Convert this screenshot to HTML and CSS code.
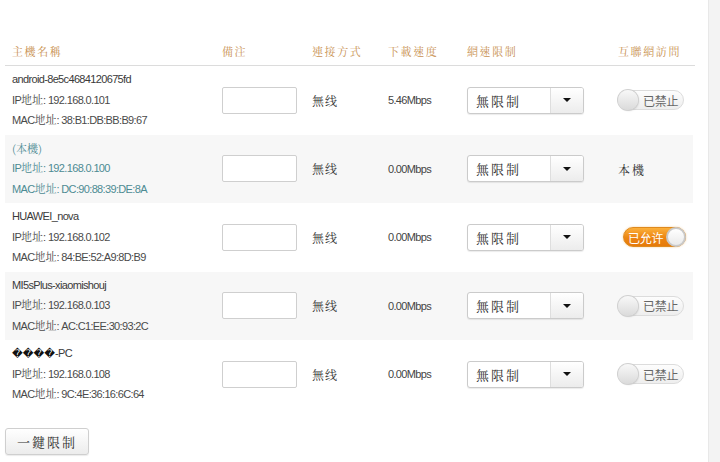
FILE: index.html
```html
<!DOCTYPE html>
<html lang="zh-Hant">
<head>
<meta charset="utf-8">
<title>設備列表</title>
<link rel="stylesheet" href="styles.css">
</head>
<body>
<div class="page">
  <main class="main">
    <div class="table">
      <div class="row head">
        <div class="c name">主機名稱</div>
        <div class="c remark">備注</div>
        <div class="c conn">連接方式</div>
        <div class="c speed">下載速度</div>
        <div class="c limit">網速限制</div>
        <div class="c access">互聯網訪問</div>
      </div>

      <div class="row">
        <div class="c name"><div class="host">android-8e5c4684120675fd</div><div class="info">IP<span class="cj">地址</span>: 192.168.0.101</div><div class="info">MAC<span class="cj">地址</span>: 38:B1:DB:BB:B9:67</div></div>
        <div class="c remark"><input class="box" type="text"></div>
        <div class="c conn">無线</div>
        <div class="c speed">5.46Mbps</div>
        <div class="c limit"><div class="sel"><span class="sel-v">無限制</span><span class="sel-a"><i class="tri"></i></span></div></div>
        <div class="c access"><div class="tog off"><i class="knob"></i><span class="tl">已禁止</span></div></div>
      </div>

      <div class="row alt self">
        <div class="c name"><div class="host cj">(本機)</div><div class="info">IP<span class="cj">地址</span>: 192.168.0.100</div><div class="info">MAC<span class="cj">地址</span>: DC:90:88:39:DE:8A</div></div>
        <div class="c remark"><input class="box" type="text"></div>
        <div class="c conn">無线</div>
        <div class="c speed">0.00Mbps</div>
        <div class="c limit"><div class="sel"><span class="sel-v">無限制</span><span class="sel-a"><i class="tri"></i></span></div></div>
        <div class="c access"><span class="local">本機</span></div>
      </div>

      <div class="row">
        <div class="c name"><div class="host">HUAWEI_nova</div><div class="info">IP<span class="cj">地址</span>: 192.168.0.102</div><div class="info">MAC<span class="cj">地址</span>: 84:BE:52:A9:8D:B9</div></div>
        <div class="c remark"><input class="box" type="text"></div>
        <div class="c conn">無线</div>
        <div class="c speed">0.00Mbps</div>
        <div class="c limit"><div class="sel"><span class="sel-v">無限制</span><span class="sel-a"><i class="tri"></i></span></div></div>
        <div class="c access"><div class="tog on"><span class="tl">已允许</span><i class="knob"></i></div></div>
      </div>

      <div class="row alt">
        <div class="c name"><div class="host">MI5sPlus-xiaomishouj</div><div class="info">IP<span class="cj">地址</span>: 192.168.0.103</div><div class="info">MAC<span class="cj">地址</span>: AC:C1:EE:30:93:2C</div></div>
        <div class="c remark"><input class="box" type="text"></div>
        <div class="c conn">無线</div>
        <div class="c speed">0.00Mbps</div>
        <div class="c limit"><div class="sel"><span class="sel-v">無限制</span><span class="sel-a"><i class="tri"></i></span></div></div>
        <div class="c access"><div class="tog off"><i class="knob"></i><span class="tl">已禁止</span></div></div>
      </div>

      <div class="row">
        <div class="c name"><div class="host"><span class="rep">����</span>-PC</div><div class="info">IP<span class="cj">地址</span>: 192.168.0.108</div><div class="info">MAC<span class="cj">地址</span>: 9C:4E:36:16:6C:64</div></div>
        <div class="c remark"><input class="box" type="text"></div>
        <div class="c conn">無线</div>
        <div class="c speed">0.00Mbps</div>
        <div class="c limit"><div class="sel"><span class="sel-v">無限制</span><span class="sel-a"><i class="tri"></i></span></div></div>
        <div class="c access"><div class="tog off"><i class="knob"></i><span class="tl">已禁止</span></div></div>
      </div>
    </div>

    <button class="btn" type="button">一鍵限制</button>
  </main>
  <aside class="rail"></aside>
</div>
</body>
</html>
```

FILE: styles.css
```css
html, body {
  margin: 0;
  padding: 0;
  background: #fff;
}
.page {
  display: flex;
  width: 720px;
  height: 462px;
  overflow: hidden;
}
.main {
  width: 708px;
  flex: none;
  padding: 36px 0 0 5px;
  box-sizing: border-box;
}
.rail {
  flex: 1;
  background: #f3f3f3;
  border-left: 1px solid #e8e8e8;
}
.table {
  width: 690px;
}
.row {
  display: grid;
  grid-template-columns: 217px 90px 76px 79px 151px 1fr;
  align-items: center;
  height: 68.5px;
  width: 688px;
  font-family: "Noto Serif CJK TC", "Noto Sans CJK TC", serif;
  color: #444;
}
.row.alt { background: #f7f7f7; }
.c.name {
  padding-left: 7px;
  font-family: "Liberation Sans", Arial, sans-serif;
  font-size: 11px;
  letter-spacing: -0.65px;
  line-height: 19.5px;
  color: #3a3a3a;
}
.cj {
  font-family: "Noto Serif CJK TC", "Noto Sans CJK TC", serif;
  font-size: 11px;
  letter-spacing: 0;
}
.info { color: #4a4a4a; }
.self .c.name, .self .info { color: #4d8b93; }
.rep {
  font-family: "DejaVu Sans", sans-serif;
  font-size: 10.5px;
  letter-spacing: 0;
  color: #111;
}
.box {
  display: block;
  width: 75px;
  height: 27px;
  box-sizing: border-box;
  border: 1px solid #cfcfcf;
  border-radius: 2px;
  background: #fff;
  margin: 0;
  padding: 0;
}
.c.conn {
  font-size: 12px;
  color: #333;
  letter-spacing: 1px;
}
.c.speed {
  font-family: "Liberation Sans", Arial, sans-serif;
  font-size: 11px;
  letter-spacing: -0.65px;
  color: #444;
}
.row.head {
  height: 29px;
  width: 690px;
  border-bottom: 1px solid #dcdcdc;
  align-items: start;
}
.row.head .c {
  font-family: "Noto Serif CJK TC", "Noto Sans CJK TC", serif;
  font-size: 11px;
  letter-spacing: 1.6px;
  color: #c8904f;
  line-height: 31px;
}
.sel {
  display: flex;
  width: 117px;
  height: 27px;
  box-sizing: border-box;
  border: 1px solid #cbcbcb;
  border-radius: 3px;
  background: #fff;
  box-shadow: 0 1px 1px rgba(0,0,0,0.08);
  overflow: hidden;
}
.sel-v {
  flex: 1;
  padding-left: 8px;
  font-size: 13px;
  line-height: 25px;
  letter-spacing: 2px;
  color: #333;
}
.sel-a {
  width: 32px;
  display: flex;
  align-items: center;
  justify-content: center;
  border-left: 1px solid #dedede;
  background: linear-gradient(#ffffff, #ececec);
}
.tri {
  width: 0;
  height: 0;
  border-left: 4px solid transparent;
  border-right: 4px solid transparent;
  border-top: 4px solid #111;
}
.tog {
  display: flex;
  align-items: center;
  height: 20px;
  box-sizing: border-box;
  border-radius: 10px;
}
.tog.off {
  width: 66px;
  border: 1px solid #dcdcdc;
  background: linear-gradient(#fdfdfd, #eeeeee);
}
.tog.off .knob {
  width: 20px;
  height: 20px;
  margin-left: -1px;
  border-radius: 50%;
  background: linear-gradient(#f8f8f8, #dadada);
  box-shadow: 0 0 0 1px #d0d0d0, 1px 1px 2px rgba(0,0,0,0.12);
}
.tog.off .tl {
  margin-left: 5px;
  font-family: "Noto Sans CJK SC", sans-serif;
  font-size: 12px;
  letter-spacing: -0.3px;
  color: #666;
}
.tog.on {
  width: 63px;
  margin-left: 5px;
  background: linear-gradient(#fbb03b, #ec8411 55%, #e57a0a);
  border: 1px solid #df8a1e;
  box-shadow: 0 0 2px rgba(240,150,30,0.5);
  justify-content: space-between;
}
.tog.on .tl {
  margin-left: 4px;
  font-family: "Noto Sans CJK SC", sans-serif;
  font-size: 12px;
  letter-spacing: -0.3px;
  color: #fff;
}
.tog.on .knob {
  width: 20px;
  height: 20px;
  margin-right: -1px;
  border-radius: 50%;
  box-sizing: border-box;
  border: 2px solid #c9c9c9;
  background: linear-gradient(#ffffff, #eaeaea);
}
.knob { display: block; flex: none; }
.local {
  font-size: 12px;
  letter-spacing: 2px;
  color: #333;
}
.btn {
  display: block;
  margin-top: 19.5px;
  width: 84px;
  height: 27px;
  padding: 0;
  border: 1px solid #cfcfcf;
  border-radius: 3px;
  background: linear-gradient(#ffffff, #ececec);
  box-shadow: 0 1px 1px rgba(0,0,0,0.08);
  font-family: "Noto Serif CJK TC", "Noto Sans CJK TC", serif;
  font-size: 13px;
  letter-spacing: 2px;
  color: #333;
}
```
